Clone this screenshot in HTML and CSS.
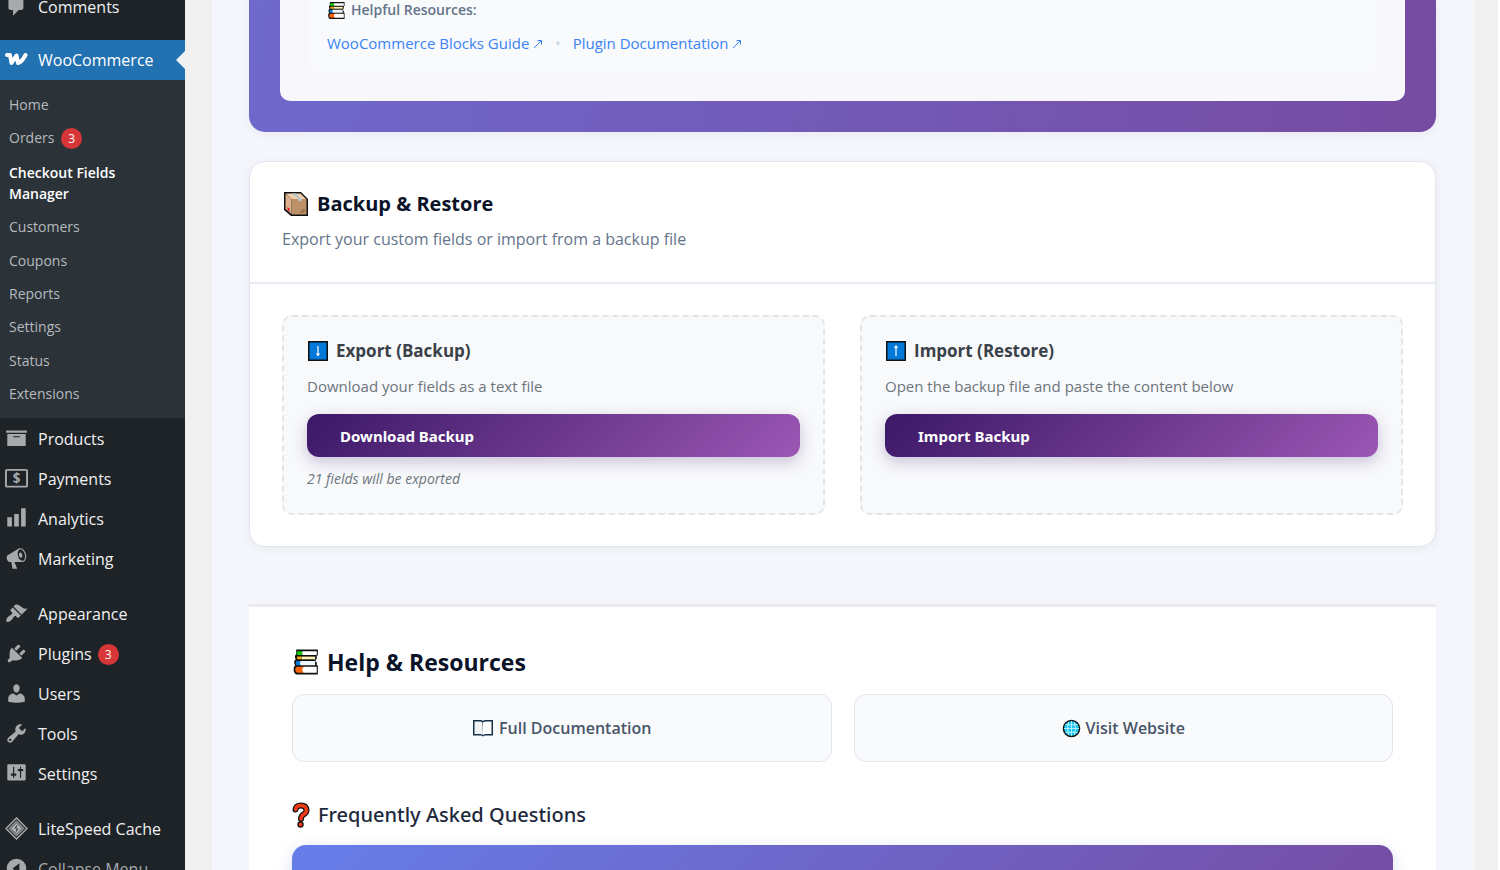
FILE: index.html
```html
<!DOCTYPE html>
<html lang="en">
<head>
<meta charset="utf-8">
<title>Checkout Fields Manager</title>
<link rel="stylesheet" href="styles.css">
</head>
<body>
<svg class="defs" aria-hidden="true">
  <symbol id="books" viewBox="0 0 26 26">
    <path d="M4 1.500h20v5.500h-1v3.500h-1v2.500h1v3h1v8.500H4q-2.500-1-2.500-4.500 0-3 1.500-4-1-1-1-2.800t1.500-2.700q-.8-1-.8-2.500 0-1.500 1-2z" fill="#111"/>
    <path d="M5 3h5v3.500H4.500q-1-2 .5-3.500z" fill="#16c60c"/><path d="M10 3h13v3.500H10q-1.500-1.500 0-3.500z" fill="#fff"/>
    <path d="M5 8h4v2.500H5q-1-1 0-2.500z" fill="#f5a800"/><path d="M9 8h12.500v2.500H9z" fill="#fff3b0"/>
    <path d="M4 12h5v4H4q-1.500-2 0-4z" fill="#0078d7"/><path d="M8 12h13.500v4H8q-1.500-2 0-4z" fill="#eef5fa"/>
    <path d="M4.500 17.500H12V23H5q-2-.500-2-2.700t1.500-2.800z" fill="#f7630c"/><path d="M11 17.500h12V23H11q-3-2.700 0-5.500z" fill="#fff"/>
  </symbol>
  <symbol id="arrow" viewBox="0 0 10 10"><path d="M1 9 8 2M4.500 1.500H8.500V5.500" fill="none" stroke="currentColor"/></symbol>
</svg>
<div class="layout">
  <nav class="sidebar" aria-label="Admin menu">
    <a class="item" href="#"><svg class="icon" viewBox="0 0 20 20"><path d="M5 2h9c1.100 0 2 .9 2 2v7c0 1.100-.9 2-2 2h-2l-5 5v-5H5c-1.100 0-2-.9-2-2V4c0-1.100.9-2 2-2z"/></svg>Comments</a>
    <a class="item current" href="#"><svg class="icon" viewBox="0 0 23 20"><path d="M2 5.500H5L6.500 13.500 11.500 6 13 13.500Q17 12.500 20.500 5.500" fill="none" stroke="#fff" stroke-width="4" stroke-linecap="round" stroke-linejoin="round"/></svg>WooCommerce</a>
    <div class="submenu">
      <a href="#">Home</a>
      <a href="#">Orders <span class="count">3</span></a>
      <a href="#" class="active">Checkout Fields Manager</a>
      <a href="#">Customers</a>
      <a href="#">Coupons</a>
      <a href="#">Reports</a>
      <a href="#">Settings</a>
      <a href="#">Status</a>
      <a href="#">Extensions</a>
    </div>
    <a class="item" href="#"><svg class="icon" viewBox="0 0 20 20"><path d="M19 3v2H1V3h18zM2 6h16v10.500H2V6zm11 3V8H7v1h6z"/></svg>Products</a>
    <a class="item" href="#"><svg class="icon" viewBox="0 0 24 20"><rect x="1" y="1" width="22" height="17.500" rx="1" fill="none" stroke="#a7aaad" stroke-width="2"/><text x="12" y="15" text-anchor="middle" class="dollar">$</text></svg>Payments</a>
    <a class="item" href="#"><svg class="icon" viewBox="0 0 20 20"><path d="M18 17V1h-4v16h4zm-6 0V6H8v11h4zm-6 0V9H2v8h4z"/></svg>Analytics</a>
    <a class="item" href="#"><svg class="icon" viewBox="0 0 20 20"><path d="M18.150 5.940c.46 1.620.38 3.220-.02 4.480-.42 1.280-1.260 2.180-2.300 2.480-.16.06-.26.06-.4.06-.06.02-.12.02-.18.02-.06.02-.14.02-.22.02h-6.800l2.220 5.500c.02.14-.06.26-.14.34-.08.1-.24.16-.34.16H6.950c-.1 0-.26-.06-.34-.16-.08-.08-.16-.2-.14-.34l-1-5.500H4.250l-.02-.02c-.5.06-1.080-.18-1.540-.62s-.88-1.080-1.060-1.880c-.24-.8-.2-1.560-.02-2.200.18-.62.58-1.080 1.060-1.300l.02-.02 9-5.400c.1-.06.18-.1.24-.16.06-.04.14-.08.24-.12.16-.08.28-.12.5-.18 1.040-.3 2.240.1 3.220.98s1.840 2.240 2.260 3.860zm-2.580 5.980h-.02c.4-.1.74-.34 1.040-.7.58-.7.86-1.760.86-3.040 0-.64-.1-1.300-.28-1.980-.34-1.360-1.020-2.500-1.780-3.240s-1.680-1.100-2.460-.88c-.82.22-1.400.96-1.700 2-.32 1.040-.28 2.360.06 3.720.38 1.360 1 2.500 1.800 3.240.78.74 1.620 1.100 2.480.88zm-2.540-7.080c.22-.04.42-.02.62.04.38.16.76.48 1.020 1s.42 1.200.42 1.780c0 .3-.04.56-.12.8-.18.48-.44.84-.86.94-.34.1-.8-.06-1.140-.4s-.64-.86-.78-1.500c-.18-.62-.12-1.240.02-1.720s.48-.84.82-.94z"/></svg>Marketing</a>
    <hr class="separator">
    <a class="item" href="#"><svg class="icon" viewBox="0 0 20 20"><path d="M14.480 11.060 7.410 3.990l1.500-1.500c.5-.56 2.300-.47 3.510.32 1.210.8 1.430 1.280 2.910 2.100 1.180.64 2.450 1.260 4.450.85zm-.71.71L6.700 4.700 4.930 6.470c-.39.39-.39 1.020 0 1.410l1.060 1.060c.39.39.39 1.030 0 1.420-.6.6-1.430 1.110-2.210 1.690-.35.26-.7.53-1.010.84C1.430 14.230.4 16.080 1.400 17.070c.99 1 2.840-.03 4.180-1.360.31-.31.58-.66.85-1.020.57-.78 1.080-1.610 1.690-2.210.39-.39 1.020-.39 1.410 0l1.060 1.060c.39.39 1.020.39 1.410 0z"/></svg>Appearance</a>
    <a class="item" href="#"><svg class="icon" viewBox="0 0 20 20"><path d="M13.110 4.360 9.870 7.600 8 5.730l3.240-3.240c.35-.34 1.050-.2 1.560.32.52.51.66 1.210.31 1.550zm-8 1.770.91-1.120 9.010 9.010-1.190.84c-.71.71-2.630 1.160-3.820 1.160H6.140L4.900 17.260c-.59.59-1.540.59-2.120 0-.59-.58-.59-1.530 0-2.120l1.240-1.240v-3.880c0-1.130.4-3.190 1.090-3.890zm7.260 3.970 3.240-3.240c.34-.35 1.040-.21 1.550.31.52.51.66 1.210.31 1.550l-3.240 3.250z"/></svg>Plugins <span class="count">3</span></a>
    <a class="item" href="#"><svg class="icon" viewBox="0 0 20 20"><path d="M10 9.250c-2.270 0-2.730-3.440-2.730-3.440C7 4.020 7.820 2 9.970 2c2.160 0 2.980 2.020 2.710 3.810 0 0-.41 3.440-2.680 3.440zm0 2.570L12.720 10c2.390 0 4.520 2.330 4.520 4.530v2.490s-3.650 1.130-7.240 1.130c-3.650 0-7.240-1.130-7.240-1.130v-2.490c0-2.250 1.940-4.480 4.470-4.480z"/></svg>Users</a>
    <a class="item" href="#"><svg class="icon" viewBox="0 0 20 20"><path d="M16.680 9.770c-1.340 1.340-3.300 1.670-4.950.99l-5.410 6.520c-.99.99-2.590.99-3.580 0s-.99-2.590 0-3.570l6.520-5.420c-.68-1.650-.35-3.610.99-4.950 1.280-1.280 3.120-1.620 4.720-1.060l-2.890 2.890 2.820 2.820 2.860-2.870c.53 1.580.18 3.390-1.080 4.650zM3.810 16.210c.4.39 1.040.39 1.430 0 .4-.4.4-1.040 0-1.430-.39-.4-1.030-.4-1.430 0-.39.39-.39 1.030 0 1.430z"/></svg>Tools</a>
    <a class="item" href="#"><svg class="icon" viewBox="0 0 20 20"><path d="M18 15V3c0-.55-.45-1-1-1H3c-.55 0-1 .45-1 1v12c0 .55.45 1 1 1h14c.55 0 1-.45 1-1zM8 10h1c.55 0 1 .45 1 1s-.45 1-1 1H8v1.500c0 .28-.22.5-.5.5s-.5-.22-.5-.5V12H6c-.55 0-1-.45-1-1s.45-1 1-1h1V4.500c0-.28.22-.5.5-.5s.5.22.5.5V10zm5-2h-1c-.55 0-1-.45-1-1s.45-1 1-1h1V4.500c0-.28.22-.5.5-.5s.5.22.5.5V6h1c.55 0 1 .45 1 1s-.45 1-1 1h-1v5.500c0 .28-.22.5-.5.5s-.5-.22-.5-.5V8z"/></svg>Settings</a>
    <hr class="separator">
    <a class="item" href="#"><svg class="icon" viewBox="0 0 24 24"><g fill="none" stroke="#a7aaad"><path d="M12 1 23 12 12 23 1 12z" stroke-width="1.500"/><path d="M12 4 20 12 12 20 4 12z" fill="#7d8185" stroke="#8f9397"/></g><path d="M12 7l5 5-5 5-5-5z" fill="#b4b7ba"/><path d="M13 7.500 9.500 12H12l-1 4.500L14.500 12H12z" fill="#3c434a"/></svg>LiteSpeed Cache</a>
    <button class="item collapse" type="button"><svg class="icon" viewBox="0 0 20 20"><path fill-rule="evenodd" d="M10 1.500a8.500 8.500 0 1 1 0 17 8.500 8.500 0 0 1 0-17zM12.500 5.500 6.500 10l6 4.500z"/></svg>Collapse Menu</button>
  </nav>

  <main class="content">
    <section class="promo">
      <div class="promo-inner">
        <div class="resources">
          <h4><svg class="emoji-s"><use href="#books"/></svg>Helpful Resources:</h4>
          <p>
            <a href="#">WooCommerce Blocks Guide <svg class="arrow"><use href="#arrow"/></svg></a>
            <span class="dot">•</span>
            <a href="#">Plugin Documentation <svg class="arrow"><use href="#arrow"/></svg></a>
          </p>
        </div>
      </div>
    </section>

    <section class="card">
      <header class="card-head">
        <h2><svg class="emoji-l" viewBox="0 0 28 28"><path d="M2 2h17l7 7v17H9l-7-6z" fill="#111"/><path d="M3.500 3.500 9.500 9v15L3.500 19z" fill="#dcb08a"/><path d="M4 3.500h14.500L24 9H9.500z" fill="#f2cfad"/><path d="M9.500 9h15v15.500h-15z" fill="#bd9168"/><path d="M10 3.500h4L19.500 9v2.500l-3.500-1V9z" fill="#b9c6cc"/><path d="m5.500 17 2 1.500v3l-2-1.500z" fill="#e81224"/><path d="M20 20h3M18 22h4.500" stroke="#7a5a38" fill="none"/></svg>Backup &amp; Restore</h2>
        <p>Export your custom fields or import from a backup file</p>
      </header>
      <div class="card-body">
        <article class="box">
          <h3><svg class="emoji-m" viewBox="0 0 22 22"><path d="M1 1h20v20H1z" fill="#111"/><path d="M2.500 2.500h17v17h-17z" fill="#0078d7"/><path d="M11 6v9M9.500 13.500 11 15.500l1.500-2" fill="none" stroke="#fff" stroke-width="1.200"/></svg>Export (Backup)</h3>
          <p>Download your fields as a text file</p>
          <button class="action" type="button">Download Backup</button>
          <p class="note">21 fields will be exported</p>
        </article>
        <article class="box">
          <h3><svg class="emoji-m" viewBox="0 0 22 22"><path d="M1 1h20v20H1z" fill="#111"/><path d="M2.500 2.500h17v17h-17z" fill="#0078d7"/><path d="M11 16V6M9.500 8 11 6l1.500 2" fill="none" stroke="#fff" stroke-width="1.200"/></svg>Import (Restore)</h3>
          <p>Open the backup file and paste the content below</p>
          <button class="action" type="button">Import Backup</button>
        </article>
      </div>
    </section>

    <section class="help">
      <h2><svg class="emoji-l"><use href="#books"/></svg>Help &amp; Resources</h2>
      <div class="help-links">
        <a href="#"><svg class="emoji-m" viewBox="0 0 22 22"><path d="M1 3h8.500l1.500 1 1.500-1H21v15.500h-8.500l-1.500 1-1.500-1H1z" fill="#173048"/><path d="M2.500 4.500H9l1.500 1L11 18l-2-1H2.500z" fill="#f0f2f3"/><path d="M19.500 4.500H13l-2 1V18l2-1h6.500z" fill="#fff"/></svg>Full Documentation</a>
        <a href="#"><svg class="emoji-s" viewBox="0 0 20 20"><circle cx="10" cy="10" r="8.500" fill="#1fc8ee" stroke="#111" stroke-width="1.500"/><path d="M10 2v16M2 10h16M3.500 6h13M3.500 14h13M7 3q-2.500 7 0 14M13 3q2.500 7 0 14" fill="none" stroke="#d9f7ff" stroke-width=".8"/></svg>Visit Website</a>
      </div>
      <h3><svg class="emoji-q" viewBox="0 0 18 26"><g fill="none" stroke-linecap="round" stroke-linejoin="round"><path d="M3.500 7.500Q4 3.500 9 3.500T14.500 8Q14.500 11 11.500 12.500 9 14 9 17" stroke="#111" stroke-width="6"/><path d="M3.500 7.500Q4 3.500 9 3.500T14.500 8Q14.500 11 11.500 12.500 9 14 9 17" stroke="#f03a17" stroke-width="3.500"/></g><circle cx="8.500" cy="22.500" r="3.200" fill="#111"/><circle cx="8.500" cy="22.500" r="1.900" fill="#f03a17"/></svg>Frequently Asked Questions</h3>
      <div class="faq"></div>
    </section>
  </main>
</div>
</body>
</html>
```

FILE: styles.css
```css
* { box-sizing: border-box; }
body {
  margin: 0;
  height: 100vh;
  overflow: hidden;
  background: #f0f0f0;
  font-family: "Open Sans", "Noto Sans", sans-serif;
  font-size: 15px;
}
h2, h3, h4, p { margin: 0; }
a { text-decoration: none; }
svg { flex: none; }
.defs { display: none; }

.layout {
  display: flex;
  align-items: flex-start;
  border-right: 2px solid #fff;
}

.sidebar {
  flex: 0 0 185px;
  height: 100vh;
  overflow: hidden;
  background: #1d2327;
  display: flex;
  flex-direction: column;
}
.item {
  flex: none;
  display: flex;
  align-items: center;
  height: 40px;
  padding: 0 0 0 5px;
  gap: 10px;
  border: 0;
  background: none;
  color: #f0f0f1;
  font: 16px "Open Sans", "Noto Sans", sans-serif;
  text-align: left;
  white-space: nowrap;
}
.item:first-child { margin: -13px 0 13px; }
.item.current { background: #2271b1; color: #fff; position: relative; }
.item.current::after {
  content: "";
  position: absolute;
  right: 0;
  top: 11px;
  border: 9px solid transparent;
  border-left: 0;
  border-right-color: #f0f0f0;
}
.icon { width: 23px; height: 23px; margin-bottom: 2px; fill: #a7aaad; }
.dollar { font: bold 14px "Open Sans", sans-serif; }
.collapse { color: #a7aaad; }
.separator { flex: none; height: 15px; margin: 0; border: 0; }
.count {
  display: inline-block;
  width: 21px;
  line-height: 21px;
  border-radius: 50%;
  background: #d63638;
  color: #fff;
  font-size: 12px;
  text-align: center;
}
.item .count { margin-left: -4px; }
.submenu {
  flex: none;
  min-height: 338px;
  margin-bottom: 1px;
  padding: 14px 10px 14px 9px;
  background: #2c3338;
  display: flex;
  flex-direction: column;
  justify-content: space-between;
}
.submenu a { color: #b5babf; font-size: 14px; line-height: 21px; }
.submenu .count { margin-left: 3px; font-size: 12px; }
.submenu .active { color: #fff; font-weight: 600; }

.content {
  flex: 1;
  min-width: 0;
  margin: 0 24px 0 27px;
  padding: 0 38px 0 37px;
  background: #f4f6fb;
}

.promo {
  padding: 0 31px 31px;
  border-radius: 0 0 16px 16px;
  background: linear-gradient(100deg, #6f69cc, #764ba2);
  box-shadow: 0 2px 8px rgba(30, 30, 80, .06);
}
.promo-inner {
  padding: 0 29px 29px;
  border-radius: 0 0 10px 10px;
  background: #f8f7fc;
}
.resources {
  padding: 0 18px 18px;
  border-radius: 0 0 6px 6px;
  background: #f8fafc;
}
.resources h4 {
  display: flex;
  align-items: center;
  gap: 5px;
  line-height: 20px;
  color: #64748b;
  font-size: 14px;
  font-weight: 600;
}
.resources p { padding-top: 12px; line-height: 22px; }
.resources a { color: #3b82f6; }
.arrow { width: 10px; height: 10px; }
.dot { margin: 0 8px; color: #cbd5e1; }
.emoji-s { width: 19px; height: 19px; }
.emoji-m { width: 22px; height: 22px; }
.emoji-l { width: 28px; height: 28px; }
.emoji-q { width: 18px; height: 26px; }

.card {
  margin-top: 29px;
  border: 1px solid #e4e6ee;
  border-radius: 16px;
  background: #fff;
  box-shadow: 0 2px 8px rgba(30, 30, 80, .06);
}
.card-head { padding: 30px 32px 31px; border-bottom: 2px solid #e9ebf2; }
.card-head h2, .help h2 {
  display: flex;
  align-items: center;
  gap: 7px;
  height: 24px;
  line-height: 24px;
  color: #0b1329;
  font-size: 20px;
  font-weight: 700;
}
.card-head p {
  margin-top: 11px;
  line-height: 24px;
  color: #64748b;
  font-size: 16px;
}
.card-body {
  display: grid;
  grid-template-columns: 1fr 1fr;
  gap: 35px;
  padding: 31px 32px;
}
.box {
  padding: 23px;
  border: 2px dashed #e3e6e9;
  border-radius: 10px;
  background: #f8f9fb;
  color: #6c757d;
  line-height: 22px;
}
.box h3 {
  display: flex;
  align-items: center;
  gap: 7px;
  margin-bottom: 13px;
  line-height: 22px;
  color: #3a4149;
  font-size: 17px;
  font-weight: 700;
}
.action {
  display: block;
  width: 100%;
  margin: 17px 0 11px;
  padding: 11px 33px 10px;
  border: 0;
  border-radius: 12px;
  background: linear-gradient(135deg, #3b1867, #9b57b4);
  box-shadow: 0 5px 15px rgba(60, 26, 110, .25);
  color: #fff;
  font: 700 15px/22px "Noto Sans", "Open Sans", sans-serif;
  text-align: left;
}
.note { font-size: 14px; font-style: italic; }

.help {
  margin-top: 57px;
  padding: 43px 43px 0;
  border-top: 3px solid #e9ebf0;
  background: #fff;
}
.help h2 { font-size: 23px; }
.help-links {
  display: grid;
  grid-template-columns: 1fr 1fr;
  gap: 22px;
  margin: 20px 0 38px;
}
.help-links a {
  display: flex;
  align-items: center;
  justify-content: center;
  gap: 5px;
  padding: 21px;
  border: 1px solid #e2e5ec;
  border-radius: 12px;
  background: #f9fafc;
  color: #475569;
  font-size: 16px;
  font-weight: 600;
  line-height: 24px;
}
.help h3 {
  display: flex;
  align-items: center;
  gap: 8px;
  line-height: 30px;
  color: #1e293b;
  font-family: "Noto Sans", "Open Sans", sans-serif;
  font-size: 20px;
  font-weight: 500;
}
.faq {
  height: 80px;
  margin-top: 15px;
  border-radius: 14px 14px 0 0;
  background: linear-gradient(135deg, #667eea, #764ba2);
  box-shadow: 0 4px 15px rgba(102, 126, 234, .25);
}
```
